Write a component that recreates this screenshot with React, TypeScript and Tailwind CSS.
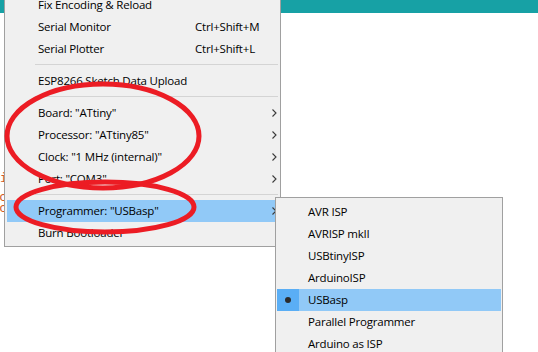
import React from "react";

const font = { fontFamily: '"Open Sans", "Noto Sans", sans-serif' };

function Chevron() {
  return (
    <svg width="5" height="8" viewBox="0 0 5 8" className="shrink-0">
      <polyline points="0.5,0.5 4,4 0.5,7.5" fill="none" stroke="#3a3a3a" strokeWidth="1.1" />
    </svg>
  );
}

type Item = { label: string; shortcut?: string; sub?: boolean; active?: boolean };

const txt = "whitespace-nowrap text-[11.5px] tracking-[-0.2px] text-black";

function MenuItem({ item }: { item: Item }) {
  return (
    <div
      className={`flex h-[22px] items-center pr-[1px] ${item.active ? "bg-[#91c9f7]" : ""}`}
    >
      <span className={`w-[188px] shrink-0 pl-[31px] ${txt}`}>{item.label}</span>
      {item.shortcut && <span className={txt}>{item.shortcut}</span>}
      {item.sub && (
        <span className="ml-auto flex items-center">
          <Chevron />
        </span>
      )}
    </div>
  );
}

function Separator() {
  return (
    <div className="flex h-[10px] flex-col pt-[4px]">
      <div className="ml-[28px] h-px bg-[#d4d4d4]" />
    </div>
  );
}

export default function App() {
  const top: Item[] = [
    { label: "Fix Encoding & Reload" },
    { label: "Serial Monitor", shortcut: "Ctrl+Shift+M" },
    { label: "Serial Plotter", shortcut: "Ctrl+Shift+L" },
  ];
  const board: Item[] = [
    { label: 'Board: "ATtiny"', sub: true },
    { label: 'Processor: "ATtiny85"', sub: true },
    { label: 'Clock: "1 MHz (internal)"', sub: true },
    { label: 'Port: "COM3"', sub: true },
  ];
  const progs = [
    "AVR ISP",
    "AVRISP mkII",
    "USBtinyISP",
    "ArduinoISP",
    "USBasp",
    "Parallel Programmer",
    "Arduino as ISP",
  ];

  return (
    <div className="relative h-[352px] w-[538px] overflow-hidden bg-white" style={font}>
      <div className="h-[13px] bg-[#17a1a5]" />
      <div
        className="flex flex-col text-[12px] leading-[11px] text-[#d5581c]"
        style={{ fontFamily: '"DejaVu Sans Mono", monospace' }}
      >
        <div className="mt-[160px] h-[11px]">i</div>
        <div className="mt-[8px] h-[11px] -ml-[1px]">c</div>
        <div className="h-[11px] -ml-[1px]">c</div>
      </div>

      {/* main menu */}
      <div className="absolute left-[4px] top-[-10px] z-10 w-[277px] border border-[#a0a0a0] bg-[#f0f0f0] px-[2px] pb-[2px] pt-[3px]">
        {top.map((it) => (
          <MenuItem key={it.label} item={it} />
        ))}
        <Separator />
        <MenuItem item={{ label: "ESP8266 Sketch Data Upload" }} />
        <Separator />
        {board.map((it) => (
          <MenuItem key={it.label} item={it} />
        ))}
        <Separator />
        <MenuItem item={{ label: 'Programmer: "USBasp"', sub: true, active: true }} />
        <MenuItem item={{ label: "Burn Bootloader" }} />
      </div>

      {/* submenu */}
      <div className="absolute left-[275px] top-[197px] z-20 w-[228px] border border-[#a0a0a0] bg-[#f0f0f0] px-[1px] pt-[3px]">
        {progs.map((p) => {
          const active = p === "USBasp";
          return (
            <div key={p} className={`flex h-[22px] items-center ${active ? "bg-[#91c9f7]" : ""}`}>
              <div
                className={`flex h-full w-[22px] shrink-0 items-center justify-center ${
                  active ? "bg-[#5aaef5]" : ""
                }`}
              >
                {active && <div className="h-[6px] w-[6px] rounded-full bg-[#2b2b2b]" />}
              </div>
              <span className={`pl-[9px] ${txt}`}>{p}</span>
            </div>
          );
        })}
      </div>

      {/* red annotations */}
      <svg
        className="pointer-events-none absolute left-0 top-0 z-30"
        width="538"
        height="352"
        viewBox="0 0 538 352"
      >
        <ellipse cx="103" cy="136" rx="96" ry="52" fill="none" stroke="#ec1c24" strokeWidth="5" />
        <ellipse cx="105" cy="207" rx="89" ry="25" fill="none" stroke="#ec1c24" strokeWidth="5" />
      </svg>
    </div>
  );
}
